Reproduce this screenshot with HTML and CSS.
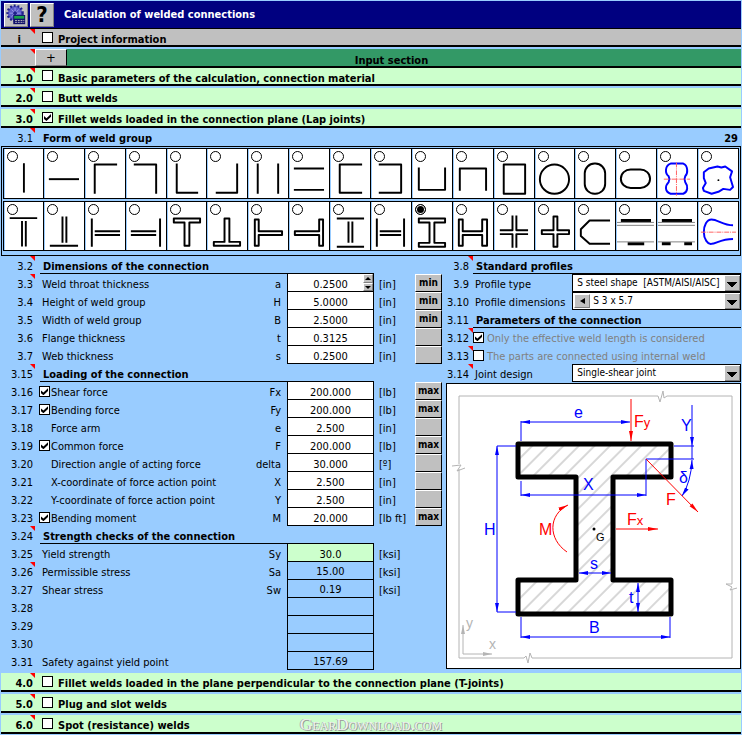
FILE: index.html
```html
<!DOCTYPE html>
<html lang="en">
    <head>
        <meta charset="utf-8" />
        <meta name="viewport" content="width=device-width, initial-scale=1" />
        <title>Calculation of welded connections</title>
        <link rel="stylesheet" href="styles.css">
    </head>
    <body>
        <header class="titlebar">
            <button class="tool" type="button" aria-label="Settings">
                <svg viewBox="0 0 24 24" width="22" height="22">
                    <circle cx="11" cy="10" r="8" fill="#5b5bc8" stroke="#20208c" stroke-width="3" stroke-dasharray="2 2"/>
                    <circle cx="11" cy="10" r="7" fill="#5b5bc8"/>
                    <path d="M11 4V16M5 10H17M7 6L15 14M15 6L7 14" stroke="#9c9ce8" stroke-width="1"/>
                    <circle cx="11" cy="10" r="2" fill="#20208c"/>
                    <rect x="9" y="12" width="13" height="10" fill="#10106c"/>
                    <rect x="10" y="13" width="11" height="3" fill="#18a048"/>
                    <path d="M11 18H21M11 20H21" stroke="#c0c0c0" stroke-width="1" stroke-dasharray="2 1"/>
                </svg>
            </button>
            <button class="tool help" type="button">?</button>
            <h1>Calculation of welded connections</h1>
        </header>
        <section class="bar info">
            <span class="num note">i</span>
            <label><input type="checkbox"> Project information</label>
        </section>
        <section class="bar input-section">
            <span class="num note"></span>
            <button class="plus" type="button">+</button>
            <h2>Input section</h2>
        </section>
        <section class="bar first">
            <span class="num note">1.0</span>
            <label><input type="checkbox"> Basic parameters of the calculation, connection material</label>
        </section>
        <section class="bar">
            <span class="num note">2.0</span>
            <label><input type="checkbox"> Butt welds</label>
        </section>
        <section class="bar">
            <span class="num note">3.0</span>
            <label><input type="checkbox" checked> Fillet welds loaded in the connection plane (Lap joints)</label>
        </section>
        <main>
            <div class="row form-title">
                <span class="num note">3.1</span>
                <h3>Form of weld group</h3>
                <output>29</output>
            </div>
            <div class="weld-groups" id="formas"><!-- one cell per weld group --></div>
            <div class="columns">
                <div class="left" id="filas"><!-- rows 3.2 to 3.31 --></div>
                <div class="right">
                    <div class="row head"><span class="num note">3.8</span><h3>Standard profiles</h3></div>
                    <div class="row">
                        <span class="num">3.9</span>
                        <label for="profile">Profile type</label>
                        <div class="combo"><select id="profile"><option>S steel shape&nbsp; [ASTM/AISI/AISC]</option></select></div>
                    </div>
                    <div class="row">
                        <span class="num">3.10</span>
                        <label for="dims">Profile dimensions</label>
                        <div class="combo">
                            <button class="prev" type="button" aria-label="Previous"></button>
                            <select id="dims"><option>S 3 x 5.7</option></select>
                        </div>
                    </div>
                    <div class="row head"><span class="num">3.11</span><h3>Parameters of the connection</h3></div>
                    <div class="row option">
                        <span class="num note">3.12</span>
                        <label><input type="checkbox" checked>Only the effective weld length is considered</label>
                    </div>
                    <div class="row option">
                        <span class="num note">3.13</span>
                        <label><input type="checkbox">The parts are connected using internal weld</label>
                    </div>
                    <div class="row">
                        <span class="num note">3.14</span>
                        <label for="joint">Joint design</label>
                        <div class="combo"><select id="joint"><option>Single-shear joint</option></select></div>
                    </div>
                    <figure class="drawing">
                        <svg viewBox="0 0 293 284">
                            <defs>
                                <pattern id="hatch" width="11" height="11" patternUnits="userSpaceOnUse" patternTransform="rotate(45)">
                                    <path d="M5 0V11" stroke="#b0b0b0" stroke-width="1"/>
                                </pattern>
                                <marker id="blue" markerWidth="9" markerHeight="6" refX="9" refY="3" orient="auto-start-reverse" markerUnits="userSpaceOnUse">
                                    <path d="M0 1L9 3L0 5Z" fill="#00f"/>
                                </marker>
                                <marker id="red" markerWidth="10" markerHeight="6" refX="10" refY="3" orient="auto-start-reverse" markerUnits="userSpaceOnUse">
                                    <path d="M0 1L10 3L0 5Z" fill="#f00"/>
                                </marker>
                                <marker id="gray" markerWidth="9" markerHeight="6" refX="9" refY="3" orient="auto" markerUnits="userSpaceOnUse">
                                    <path d="M0 1L9 3L0 5Z" fill="#b4b4b4"/>
                                </marker>
                            </defs>
                            <!-- frame with break marks, and axes -->
                            <g class="frame">
                                <path d="M12 80V12H211L213 18L216 7L217 14L220 12H285V200H279L285 203L283 206L290 204M285 206V274H85L83 269L81 279L79 272L77 274H12V85M5 82L14 81L10 87L18 84"/>
                                <path d="M16 270V241" marker-end="url(#gray)"/>
                                <path d="M16 270H45" marker-end="url(#gray)"/>
                            </g>
                            <!-- section -->
                            <path d="M71 60H224V93H166V196H224V230H71V196H129V93H71Z" fill="url(#hatch)" stroke="#000" stroke-width="5" stroke-linejoin="round"/>
                            <circle cx="147" cy="145" r="1.5"/>
                            <!-- dimensions -->
                            <g class="dim">
                                <path d="M50 62H69M50 228H69M74 37V57M74 97V112M199 75V112M227 62H247M199 75H247M245 62V75M74 233V254M223 233V254"/>
                                <g marker-end="url(#blue)">
                                    <path d="M245 21V62"/>
                                    <g marker-start="url(#blue)">
                                        <path d="M50 62V228"/>
                                        <path d="M74 38H183"/>
                                        <path d="M74 111H199"/>
                                        <path d="M132 189H164"/>
                                        <path d="M191 199V228"/>
                                        <path d="M74 253H223"/>
                                        <path d="M245 76Q244 98 235 112"/>
                                    </g>
                                </g>
                            </g>
                            <g class="force" marker-end="url(#red)">
                                <path d="M184 15V57"/>
                                <path d="M199 75L251 128"/>
                                <path d="M169 145H211"/>
                                <path d="M120 168C101 155 101 131 121 121"/>
                            </g>
                            <g class="dim-text">
                                <text x="127" y="34">e</text>
                                <text x="234" y="47">Y</text>
                                <text x="136" y="106">X</text>
                                <text x="232" y="99">δ</text>
                                <text x="37" y="151">H</text>
                                <text x="143" y="185">s</text>
                                <text x="182" y="219">t</text>
                                <text x="142" y="249">B</text>
                            </g>
                            <g class="force-text">
                                <text x="187" y="43">F<tspan font-size="13">y</tspan></text>
                                <text x="180" y="141">F<tspan font-size="13">x</tspan></text>
                                <text x="219" y="121">F</text>
                                <text x="92" y="151">M</text>
                            </g>
                            <text x="149" y="157" font-size="11">G</text>
                            <g class="axis-text">
                                <text x="19" y="244">y</text>
                                <text x="42" y="265">x</text>
                            </g>
                        </svg>
                    </figure>
                </div>
            </div>
        </main>
        <section class="bar last-group">
            <span class="num note">4.0</span>
            <label><input type="checkbox"> Fillet welds loaded in the plane perpendicular to the connection plane (T-joints)</label>
        </section>
        <section class="bar">
            <span class="num note">5.0</span>
            <label><input type="checkbox"> Plug and slot welds</label>
        </section>
        <section class="bar">
            <span class="num note">6.0</span>
            <label><input type="checkbox"> Spot (resistance) welds</label>
            <span class="brand">GearDownload.com</span>
        </section>
        <script>
            // WELD GROUPS: each string is the path of one symbol
            const blue = (d) => `<path class="blue" d="${d}"/>`;
            const red = (d) => `<path class="red" d="${d}"/>`;
            const black = (d) => `<path d="${d}"/>`;
            const plates = `<path class="thin" d="M1 21H39M1 24H39M1 41H39"/><path class="thick" d="M5 19H36"/>`;

            const formas = [
                black("M21 15V46"),
                black("M5 31H36"),
                black("M33 16H10V46"),
                black("M8 16H31V46"),
                black("M10 15V45H32"),
                black("M9 45H31V15"),
                black("M10 15V46M31 15V46"),
                black("M5 20H36M5 42H36"),
                black("M33 16H10V45H33"),
                black("M8 16H31V45H8"),
                black("M7 19V42H34V19"),
                black("M7 43V20H34V43"),
                black("M10 16H32V46H10Z"),
                `<circle cx="20" cy="31" r="15"/>`,
                `<rect x="10" y="15" width="21" height="31" rx="10"/>`,
                `<rect x="5" y="21" width="30" height="19" rx="10"/>`,
                blue("M14 15H27C32 17 32 25 29 28C28 30 28 32 29 34C32 38 32 44 27 46H14C8 44 8 38 12 34C13 32 13 30 12 28C8 25 8 17 14 15Z") + red("M7 31H34M20 14V48"),
                blue("M6 24L11 20L20 18L24 19L28 18L35 23L33 29L36 39L33 42L26 41L21 44L14 46L6 43L5 40L8 35L6 30Z") + `<circle class="dot" cx="21" cy="32" r="1"/>`,
                black("M6 17H35M19 20V47M23 20V47"),
                black("M19 15V42M23 15V42M6 45H35"),
                black("M7 17V46M10 30H36M10 34H36"),
                black("M35 17V46M5 30H31M5 34H31"),
                black("M7 17H34V21H23V45H18V21H7Z"),
                black("M7 45V41H18V17H23V41H34V45Z"),
                black("M7 18H11V30H35V34H11V45H7Z"),
                black("M35 18H31V30H6V34H31V45H35Z"),
                black("M7 17H35M7 46H35M19 20V42M23 20V42"),
                black("M6 17V46M34 17V46M9 30H31M9 34H31"),
                black("M7 17H34V21H23V42H34V46H7V42H18V21H7Z"),
                black("M6 18H10V30H30V18H35V45H30V34H10V45H6Z"),
                black("M19 14V29H6M23 14V29H35M19 47V33H6M23 47V33H35"),
                black("M19 15H23V29H35V33H23V46H19V33H7V29H19Z"),
                black("M36 19H15L6 28V35L15 43H36"),
                plates + `<path class="thick" d="M12 43H29"/>`,
                plates + `<path class="thick" d="M5 43H14M28 43H36"/>`,
                blue("M36 24C26 24 20 18 14 18C9 18 6 24 6 31C6 38 10 44 14 43C18 43 24 38 36 38") + red("M3 31H39"),
            ];

            const grupo = document.querySelector("#formas");

            formas.forEach((d, i) => {
                grupo.innerHTML += `<label class="cell">
                    <input type="radio" name="forma" aria-label="Weld group ${i + 1}" ${i == 28 ? "checked" : ""}>
                    <svg viewBox="0 0 41 50">${d}</svg>
                </label>`;
            });

            // ROWS: [number, text, symbol, value, unit, button, kind]
            const filas = [
                ["3.2", "Dimensions of the connection"],
                ["3.3", "Weld throat thickness", "a", "0.2500", "in", "min"],
                ["3.4", "Height of weld group", "H", "5.0000", "in", "min"],
                ["3.5", "Width of weld group", "B", "2.5000", "in", "min"],
                ["3.6", "Flange thickness", "t", "0.3125", "in", ""],
                ["3.7", "Web thickness", "s", "0.2500", "in", ""],
                ["3.15", "Loading of the connection"],
                ["3.16", "Shear force", "Fx", "200.000", "lb", "max", "check"],
                ["3.17", "Bending force", "Fy", "200.000", "lb", "max", "check"],
                ["3.18", "Force arm", "e", "2.500", "in", "", "indent"],
                ["3.19", "Common force", "F", "200.000", "lb", "max", "check"],
                ["3.20", "Direction angle of acting force", "delta", "30.000", "º", "", "indent"],
                ["3.21", "X-coordinate of force action point", "X", "2.500", "in", "", "indent"],
                ["3.22", "Y-coordinate of force action point", "Y", "2.500", "in", "", "indent"],
                ["3.23", "Bending moment", "M", "20.000", "lb ft", "max", "check"],
                ["3.24", "Strength checks of the connection"],
                ["3.25", "Yield strength", "Sy", "30.0", "ksi"],
                ["3.26", "Permissible stress", "Sa", "15.00", "ksi"],
                ["3.27", "Shear stress", "Sw", "0.19", "ksi"],
                ["3.28", "", "", "", ""],
                ["3.29", "", "", "", ""],
                ["3.30", "", "", "", ""],
                ["3.31", "Safety against yield point", "", "157.69", ""],
            ];
            const notas = ["3.2", "3.3", "3.15", "3.24", "3.26"];

            let html = "";

            filas.forEach(([num, texto, simbolo, valor, unidad, boton, tipo]) => {
                const numero = `<span class="num ${notas.includes(num) ? "note" : ""}">${num}</span>`;
                if (valor === undefined) {
                    html += `<div class="row head">${numero}<h3>${texto}</h3></div>`;
                    return;
                }
                const id = "v" + num.replace(".", "-");
                const editable = boton !== undefined || num == "3.25";
                const nombre = tipo == "check"
                    ? `<label class="check"><input type="checkbox" checked>${texto}</label>`
                    : `<label class="${tipo || ""}" for="${id}">${texto}</label>`;
                html += `<div class="row">${numero}${nombre}
                    <label class="symbol" for="${id}">${simbolo}</label>
                    <div class="value ${num == "3.25" ? "material" : ""}">
                        ${editable ? `<input type="text" id="${id}" aria-label="${texto}" value="${valor}">` : `<output id="${id}">${valor}</output>`}
                        ${num == "3.3" ? `<span class="spin"><button type="button" aria-label="Up"></button><button type="button" aria-label="Down"></button></span>` : ""}
                    </div>
                    <span class="unit">${unidad ? `[${unidad}]` : ""}</span>
                    ${boton !== undefined ? `<button class="limit" type="button" aria-label="${boton || "Limit"}">${boton}</button>` : ""}
                </div>`;
            });

            document.querySelector("#filas").innerHTML = html;
        </script>
    </body>
</html>
```
FILE: styles.css
```css
*{ margin:0; padding:0; box-sizing:border-box; }
body{ padding:1px;
    font-family: "DejaVu Sans Condensed", "DejaVu Sans", sans-serif;
    font-size: 11px;
    line-height: 16px;
    background-color: #99ccff;
    color: #000; }
h1, h2, h3{ font-size: 11px; font-weight: bold; }
button, input, select{ font: inherit; color: inherit; border: 0; border-radius: 0; }
button{ background-color: #c0c0c0;
    border: 1px solid;
    border-color: #fff #808080 #808080 #fff; }

/* title */
.titlebar{ display: flex;
    align-items: center;
    gap: 2px;
    height: 28px;
    padding: 0 3px;
    background-color: #000080;
    border-bottom: 1px solid #000; }
.titlebar h1{ margin-left: 8px; color: #fff; }
.tool{ width: 24px; height: 24px; line-height: 22px; }
.tool svg{ display: block; }
.help{ font-size: 22px; font-weight: bold; }

/* section bars */
.bar{ position: relative;
    display: flex;
    height: 19px;
    margin-top: 2px;
    background-color: #ccffcc;
    border-bottom: 2px solid #000;
    font-weight: bold; }
.bar label{ display: flex; gap: 5px; padding-left: 7px; line-height: 22px; }
.bar .num{ line-height: 22px; }
.bar input{ margin-top: 3px; }
.info{ height: 18px; margin-top: 0; background-color: #c0c0c0; }
.info .num{ padding-right: 14px; }
.input-section{ background-color: #339966; }
.input-section .num{ background-color: #c0c0c0; }
.input-section h2{ flex: 1; padding-right: 25px; line-height: 24px; text-align: center; }
.plus{ width: 32px; border-right: 1px solid #000; font-size: 13px; font-weight: normal; }
.first{ height: 18px; margin-top: 0; }
.first input{ margin-top: 2px; }
.last-group{ margin-top: 3px; }
.brand{ position: absolute;
    left: 50%;
    bottom: -2px;
    transform: translateX(-50%);
    font-family: "Liberation Serif", serif;
    font-variant: small-caps;
    font-size: 17px;
    font-weight: normal;
    line-height: 19px;
    color: #f0f4f0;
    text-shadow: 1px 1px 0 #999, -1px 0 0 #b0b0b0; }

.num{ position: relative; flex: none; width: 34px; padding-right: 2px; text-align: right; }
.note::before{ content: "";
    position: absolute;
    top: 0;
    right: 0;
    border-top: 5px solid #f00;
    border-left: 5px solid transparent; }

input[type="checkbox"]{ flex: none;
    appearance: none;
    width: 11px;
    height: 11px;
    border: 1px solid #000;
    background-color: #fff; }
input[type="checkbox"]:checked::before{ content: "";
    display: block;
    width: 7px;
    height: 7px;
    margin: 1px;
    background-color: #000;
    clip-path: polygon(0 30%, 35% 60%, 100% 0, 100% 40%, 35% 100%, 0 70%); }

/* weld groups */
.form-title{ height: 17px; }
.form-title h3{ flex: 1; padding-left: 8px; line-height: 22px; }
.form-title .num, .form-title output{ line-height: 22px; }
.form-title output{ padding-right: 3px; font-weight: bold; }
.weld-groups{ display: grid;
    grid-template-columns: repeat(18, 1fr);
    row-gap: 2px;
    padding: 1px 1px 4px;
    border: 1px solid #000;
    outline: 1px solid #99ccff; }
.cell{ position: relative;
    border: 1px solid #000;
    border-left-width: 0;
    background-color: #fff;
    box-shadow: inset 1px 0 #99ccff; }
.cell:nth-child(18n+1){ border-left-width: 1px; }
.cell input{ position: absolute;
    top: 2px;
    left: 3px;
    appearance: none;
    width: 11px;
    height: 11px;
    border: 1px solid #000;
    border-radius: 50%;
    background-color: #fff; }
.cell input:checked{ background-color: #000; box-shadow: inset 0 0 0 1px #fff; }
.cell svg{ display: block; width: 100%; fill: none; stroke: #000; stroke-width: 2; stroke-linejoin: round; }
.cell .blue{ stroke: #0000ff; }
.cell .red{ stroke: #ff6060; stroke-width: 1; stroke-dasharray: 5 1 1 1; }
.cell .thin{ stroke: #808080; stroke-width: 1; }
.cell .thick{ stroke-width: 3; }
.cell .dot{ fill: #000; stroke: none; }

/* the two columns of rows */
.columns{ display: grid; grid-template-columns: 3fr 2fr; }
.row{ display: flex; height: 18px; }
.left, .right{ line-height: 21px; }
.left{ padding-right: 3px; }
.row label{ padding-left: 7px; white-space: nowrap; }
.row .check{ display: flex; gap: 1px; padding-left: 4px; }
.row .check input{ margin-top: 4px; }
.row .indent{ padding-left: 16px; }
.head h3{ flex: 1; border-bottom: 1px solid #000; margin-left: 5px; padding-left: 3px; }
.left .head{ padding-right: 68px; }
.row .symbol{ flex: 1; padding: 0 6px 0 0; text-align: right; }
.value{ position: relative;
    flex: none;
    width: 87px;
    border: solid #000;
    border-width: 0 1px 1px; }
.value input, .value output{ display: block;
    width: 100%;
    height: 17px;
    padding-top: 3px;
    line-height: 14px;
    text-align: center; }
.value input{ background-color: #fff; }
.material input{ background-color: #ccffcc; }
.spin{ position: absolute; top: 0; right: 0; display: grid; width: 10px; height: 17px; }
.spin button{ display: grid; place-items: center; }
.spin button::before{ content: ""; border: 3px solid transparent; border-top-width: 0; border-bottom-color: #000; }
.spin button + button::before{ transform: rotate(180deg); }
.unit{ flex: none; width: 41px; padding-left: 5px; white-space: nowrap; }
.limit{ flex: none; width: 27px; height: 18px; border-bottom-color: #000; border-right-color: #000; font-size: 10px; font-weight: bold; line-height: 14px; }
.row:not(:has(.limit)) .unit{ width: 68px; }

.right .num{ width: 28px; padding-right: 4px; white-space: nowrap; }
.right .head h3{ margin-left: 0; }
.right .row label{ flex: 1; padding-left: 2px; }
.right .option label{ display: flex; gap: 3px; padding-left: 0; color: #808080; }
.option input{ margin-top: 4px; }
.combo{ display: flex;
    position: relative;
    width: 57%;
    padding: 1px;
    border: 1px solid #000;
    background-color: #fff; }
.combo select{ flex: 1; min-width: 0; appearance: none; padding-left: 3px; background-color: #fff; font-size: 10px; line-height: 14px; }
.combo::after{ content: "";
    position: absolute;
    top: 0;
    right: 0;
    width: 16px;
    height: 16px;
    background: conic-gradient(from -45deg at 50% 100%, #000 90deg, transparent 0) 50% 60% / 10px 5px no-repeat #c0c0c0;
    pointer-events: none;
    box-shadow: inset 1px 1px #fff, inset -1px -1px #808080; }
.prev{ display: grid; place-items: center; width: 16px; }
.prev::before{ content: ""; border: 3px solid transparent; border-left-width: 0; border-right: 5px solid #000; }
.drawing{ margin: 1px 0 0 1px; border: 1px solid #000; background-color: #fff; }
.drawing svg{ display: block; width: 100%; font-family: "Liberation Sans Narrow", "Liberation Sans", sans-serif; font-size: 16px; }
.frame{ fill: none; stroke: #b4b4b4; }
.dim{ fill: none; stroke: #0000ff; }
.force{ fill: none; stroke: #ff0000; }
.dim-text{ fill: #0000ff; }
.force-text{ fill: #ff0000; }
.axis-text{ fill: #b4b4b4; font-size: 14px; }
```
